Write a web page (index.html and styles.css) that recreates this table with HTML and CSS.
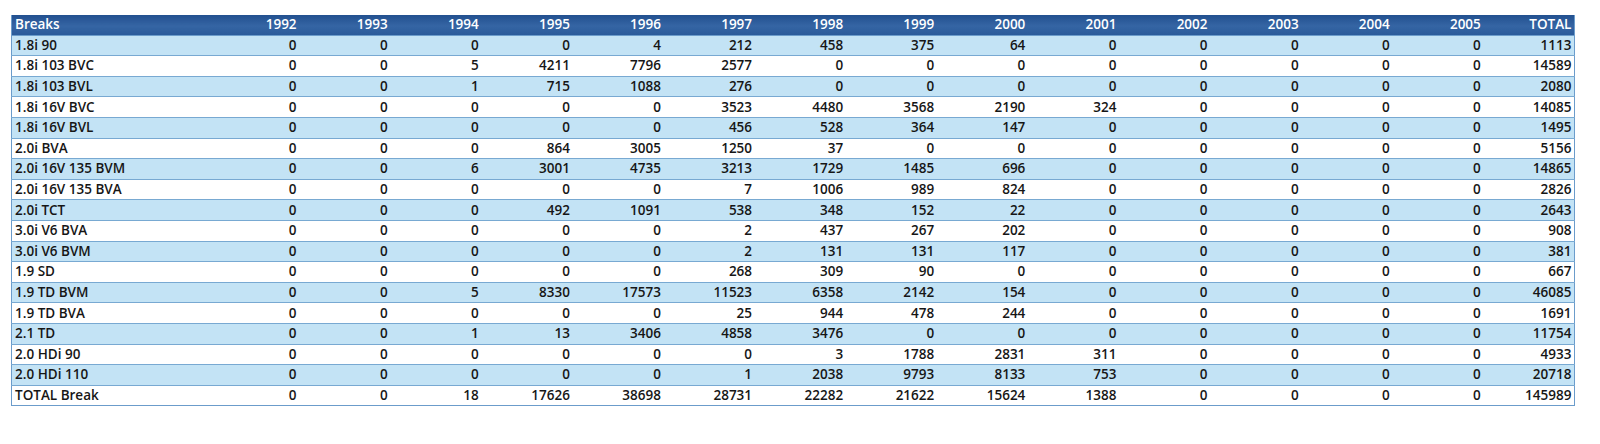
FILE: index.html
```html
<!DOCTYPE html>
<html>
<head>
<meta charset="utf-8">
<link rel="stylesheet" href="styles.css">
</head>
<body>
<div class="page">
<table class="breaks">
<colgroup>
<col class="c-name">
<col class="c-num"><col class="c-num"><col class="c-num"><col class="c-num"><col class="c-num"><col class="c-num"><col class="c-num"><col class="c-num"><col class="c-num"><col class="c-num"><col class="c-num"><col class="c-num"><col class="c-num"><col class="c-num"><col class="c-num">
</colgroup>
<thead>
<tr><th class="name">Breaks</th><th>1992</th><th>1993</th><th>1994</th><th>1995</th><th>1996</th><th>1997</th><th>1998</th><th>1999</th><th>2000</th><th>2001</th><th>2002</th><th>2003</th><th>2004</th><th>2005</th><th>TOTAL</th></tr>
</thead>
<tbody>
<tr><td class="name">1.8i 90</td><td>0</td><td>0</td><td>0</td><td>0</td><td>4</td><td>212</td><td>458</td><td>375</td><td>64</td><td>0</td><td>0</td><td>0</td><td>0</td><td>0</td><td>1113</td></tr>
<tr><td class="name">1.8i 103 BVC</td><td>0</td><td>0</td><td>5</td><td>4211</td><td>7796</td><td>2577</td><td>0</td><td>0</td><td>0</td><td>0</td><td>0</td><td>0</td><td>0</td><td>0</td><td>14589</td></tr>
<tr><td class="name">1.8i 103 BVL</td><td>0</td><td>0</td><td>1</td><td>715</td><td>1088</td><td>276</td><td>0</td><td>0</td><td>0</td><td>0</td><td>0</td><td>0</td><td>0</td><td>0</td><td>2080</td></tr>
<tr><td class="name">1.8i 16V BVC</td><td>0</td><td>0</td><td>0</td><td>0</td><td>0</td><td>3523</td><td>4480</td><td>3568</td><td>2190</td><td>324</td><td>0</td><td>0</td><td>0</td><td>0</td><td>14085</td></tr>
<tr><td class="name">1.8i 16V BVL</td><td>0</td><td>0</td><td>0</td><td>0</td><td>0</td><td>456</td><td>528</td><td>364</td><td>147</td><td>0</td><td>0</td><td>0</td><td>0</td><td>0</td><td>1495</td></tr>
<tr><td class="name">2.0i BVA</td><td>0</td><td>0</td><td>0</td><td>864</td><td>3005</td><td>1250</td><td>37</td><td>0</td><td>0</td><td>0</td><td>0</td><td>0</td><td>0</td><td>0</td><td>5156</td></tr>
<tr><td class="name">2.0i 16V 135 BVM</td><td>0</td><td>0</td><td>6</td><td>3001</td><td>4735</td><td>3213</td><td>1729</td><td>1485</td><td>696</td><td>0</td><td>0</td><td>0</td><td>0</td><td>0</td><td>14865</td></tr>
<tr><td class="name">2.0i 16V 135 BVA</td><td>0</td><td>0</td><td>0</td><td>0</td><td>0</td><td>7</td><td>1006</td><td>989</td><td>824</td><td>0</td><td>0</td><td>0</td><td>0</td><td>0</td><td>2826</td></tr>
<tr><td class="name">2.0i TCT</td><td>0</td><td>0</td><td>0</td><td>492</td><td>1091</td><td>538</td><td>348</td><td>152</td><td>22</td><td>0</td><td>0</td><td>0</td><td>0</td><td>0</td><td>2643</td></tr>
<tr><td class="name">3.0i V6 BVA</td><td>0</td><td>0</td><td>0</td><td>0</td><td>0</td><td>2</td><td>437</td><td>267</td><td>202</td><td>0</td><td>0</td><td>0</td><td>0</td><td>0</td><td>908</td></tr>
<tr><td class="name">3.0i V6 BVM</td><td>0</td><td>0</td><td>0</td><td>0</td><td>0</td><td>2</td><td>131</td><td>131</td><td>117</td><td>0</td><td>0</td><td>0</td><td>0</td><td>0</td><td>381</td></tr>
<tr><td class="name">1.9 SD</td><td>0</td><td>0</td><td>0</td><td>0</td><td>0</td><td>268</td><td>309</td><td>90</td><td>0</td><td>0</td><td>0</td><td>0</td><td>0</td><td>0</td><td>667</td></tr>
<tr><td class="name">1.9 TD BVM</td><td>0</td><td>0</td><td>5</td><td>8330</td><td>17573</td><td>11523</td><td>6358</td><td>2142</td><td>154</td><td>0</td><td>0</td><td>0</td><td>0</td><td>0</td><td>46085</td></tr>
<tr><td class="name">1.9 TD BVA</td><td>0</td><td>0</td><td>0</td><td>0</td><td>0</td><td>25</td><td>944</td><td>478</td><td>244</td><td>0</td><td>0</td><td>0</td><td>0</td><td>0</td><td>1691</td></tr>
<tr><td class="name">2.1 TD</td><td>0</td><td>0</td><td>1</td><td>13</td><td>3406</td><td>4858</td><td>3476</td><td>0</td><td>0</td><td>0</td><td>0</td><td>0</td><td>0</td><td>0</td><td>11754</td></tr>
<tr><td class="name">2.0 HDi 90</td><td>0</td><td>0</td><td>0</td><td>0</td><td>0</td><td>0</td><td>3</td><td>1788</td><td>2831</td><td>311</td><td>0</td><td>0</td><td>0</td><td>0</td><td>4933</td></tr>
<tr><td class="name">2.0 HDi 110</td><td>0</td><td>0</td><td>0</td><td>0</td><td>0</td><td>1</td><td>2038</td><td>9793</td><td>8133</td><td>753</td><td>0</td><td>0</td><td>0</td><td>0</td><td>20718</td></tr>
<tr class="total"><td class="name">TOTAL Break</td><td>0</td><td>0</td><td>18</td><td>17626</td><td>38698</td><td>28731</td><td>22282</td><td>21622</td><td>15624</td><td>1388</td><td>0</td><td>0</td><td>0</td><td>0</td><td>145989</td></tr>
</tbody>
</table>
</div>
</body>
</html>
```
FILE: styles.css
```css
html, body {
  margin: 0;
  padding: 0;
  background: #ffffff;
}

.page {
  padding: 15px 0 0 11px;
}

.breaks {
  border-collapse: collapse;
  table-layout: fixed;
  width: 1564px;
  font-family: "Open Sans", "Liberation Sans", sans-serif;
  font-weight: 600;
  font-size: 13.5px;
  color: #161616;
  border-left: 1px solid #6b9ccb;
  border-right: 1px solid #6b9ccb;
  border-bottom: 1px solid #6b9ccb;
}

.c-name { width: 197px; }
.c-num { width: 91.1px; }

.breaks th,
.breaks td {
  height: 19.6px;
  padding: 0 3px 0 3px;
  text-align: right;
  line-height: 19px;
  white-space: nowrap;
  overflow: hidden;
}

.breaks th {
  background: linear-gradient(#22508f, #3565a4 55%, #2a5b9a);
  color: #ffffff;
  font-weight: 600;
  border-bottom: 1px solid #6b9ccb;
}

.breaks td {
  border-bottom: 1px solid #78a9d2;
}

.breaks .name {
  text-align: left;
}

.breaks tbody tr:nth-child(odd) td {
  background: #c3e3f5;
}

.breaks tbody tr:nth-child(even) td {
  background: #ffffff;
}

.breaks tr.total td {
  border-bottom: none;
}
```
